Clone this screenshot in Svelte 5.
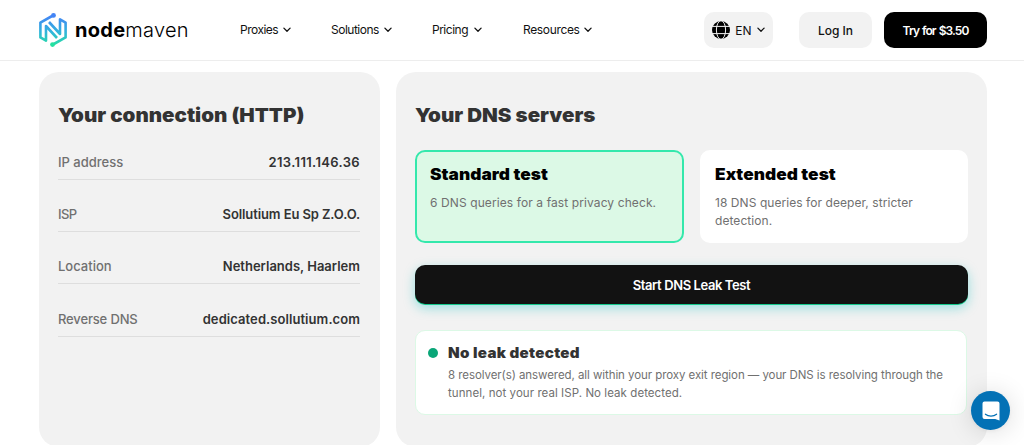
<script>
  const nav = [
    { label: 'Proxies', key: 'proxies' },
    { label: 'Solutions', key: 'solutions' },
    { label: 'Pricing', key: 'pricing' },
    { label: 'Resources', key: 'resources' }
  ];

  const connection = [
    { label: 'IP address', value: '213.111.146.36', key: 'ip' },
    { label: 'ISP', value: 'Sollutium Eu Sp Z.O.O.', key: 'isp' },
    { label: 'Location', value: 'Netherlands, Haarlem', key: 'location' },
    { label: 'Reverse DNS', value: 'dedicated.sollutium.com', key: 'reverse' }
  ];

  let mode = $state('standard');
</script>

{#snippet chevron()}
  <svg class="chevron" viewBox="0 0 8 6" width="8" height="6">
    <path d="M0.9 1.1 4 4.2 7.1 1.1" fill="none" stroke="currentColor" stroke-width="1.3" stroke-linecap="round" stroke-linejoin="round" />
  </svg>
{/snippet}

<header>
  <a class="logo" href="#home">
    <svg viewBox="0 0 28 36" width="28" height="36">
      <defs>
        <linearGradient id="mark" x1="0" y1="0" x2="0" y2="36" gradientUnits="userSpaceOnUse">
          <stop offset="0.1" stop-color="#4384f5" />
          <stop offset="0.55" stop-color="#32b4dc" />
          <stop offset="0.95" stop-color="#25e0a0" />
        </linearGradient>
      </defs>
      <g fill="none" stroke="url(#mark)" stroke-width="2.6" stroke-linejoin="round">
        <path d="M14 3.5 1.4 10.6V25.4L7 28.6V14L18 26" />
        <path d="M14 32.5 26.6 25.4V10.6L21 7.4V22L10 10" />
      </g>
      <circle cx="14.5" cy="3.4" r="2.4" fill="#4384f5" />
      <circle cx="13.5" cy="32.6" r="2.4" fill="#25e0a0" />
    </svg>
    <span class="word"><b>node</b><span>maven</span></span>
  </a>
  <nav>
    {#each nav as item}
      <a class={item.key} href="#{item.key}"><span>{item.label}</span>{@render chevron()}</a>
    {/each}
  </nav>
  <div class="actions">
    <button class="lang">
      <svg viewBox="0 0 18 18" width="18" height="18">
        <circle cx="9" cy="9" r="9" fill="#000" />
        <g fill="none" stroke="#f2f2f2" stroke-width="1">
          <ellipse cx="9" cy="9" rx="4.6" ry="9.3" />
          <path d="M0 5.4H18M0 12.6H18" />
        </g>
      </svg>
      <span>EN</span>
      {@render chevron()}
    </button>
    <button class="login"><span>Log In</span></button>
    <button class="try"><span>Try for $3.50</span></button>
  </div>
</header>

<main>
  <section class="panel connection">
    <h2>Your connection (HTTP)</h2>
    <dl>
      {#each connection as row}
        <div class="row {row.key}">
          <dt>{row.label}</dt>
          <dd>{row.value}</dd>
        </div>
      {/each}
    </dl>
  </section>

  <section class="panel servers">
    <h2>Your DNS servers</h2>
    <div class="tests">
      <button class="test standard" class:active={mode === 'standard'} onclick={() => (mode = 'standard')}>
        <strong>Standard test</strong>
        <span>6 DNS queries for a fast privacy check.</span>
      </button>
      <button class="test extended" class:active={mode === 'extended'} onclick={() => (mode = 'extended')}>
        <strong>Extended test</strong>
        <span>18 DNS queries for deeper, stricter<br />detection.</span>
      </button>
    </div>
    <button class="start"><span>Start DNS Leak Test</span></button>
    <div class="result">
      <i class="dot"></i>
      <div>
        <h3>No leak detected</h3>
        <p>
          <span class="first">8 resolver(s) answered, all within your proxy exit region — your DNS is resolving through the</span><br />
          <span class="second">tunnel, not your real ISP. No leak detected.</span>
        </p>
      </div>
    </div>
  </section>
</main>

<button class="chat" aria-label="Open chat">
  <svg viewBox="0 0 18 20" width="18" height="20">
    <path d="M2.5 0.5h13a2 2 0 0 1 2 2v17L13.2 18H2.5a2 2 0 0 1-2-2V2.5a2 2 0 0 1 2-2z" fill="#fff" />
    <path d="M3.4 13.2c3.2 2.6 8 2.6 11.2 0" fill="none" stroke="#0371b5" stroke-width="1.2" stroke-linecap="round" />
  </svg>
</button>

<style>
  :global(body) {
    height: 445px;
    overflow: hidden;
    background: #fff;
    color: #111;
    font-family: Inter, "Liberation Sans", sans-serif;
  }

  button {
    border: 0;
    padding: 0;
    font: inherit;
    color: inherit;
    text-align: left;
  }

  a {
    color: inherit;
    text-decoration: none;
  }

  h2, h3, p, dl, dd {
    margin: 0;
  }

  span, dt, dd, h2, h3, strong {
    white-space: nowrap;
  }

  header {
    display: flex;
    align-items: center;
    box-sizing: border-box;
    height: 61px;
    padding: 0 37px 0 39px;
    border-bottom: 1px solid #ededed;
  }

  .logo {
    display: flex;
    align-items: center;
    gap: 8px;
    width: 201px;
    color: #000;
    font-size: 20px;
    line-height: 36px;
  }

  .word {
    letter-spacing: 0.27px;
  }

  .word b {
    font-weight: 700;
  }

  .word span {
    font-weight: 300;
  }

  nav {
    display: flex;
    font-size: 12px;
    line-height: 18px;
    letter-spacing: -0.5px;
  }

  nav a {
    display: flex;
    align-items: center;
    justify-content: space-between;
    width: 51px;
    margin-right: 40px;
  }

  nav .solutions { width: 61px; }
  nav .pricing { width: 50px; }
  nav .resources { width: 69px; margin: 0 0 0 1px; letter-spacing: -0.35px; }

  .actions {
    display: flex;
    margin-left: auto;
    font-size: 12px;
    font-weight: 500;
    letter-spacing: -0.3px;
  }

  .actions button {
    display: flex;
    align-items: center;
    justify-content: center;
    box-sizing: border-box;
    height: 36px;
    border-radius: 10px;
    background: #f2f2f2;
  }

  .actions .lang {
    width: 69px;
    gap: 5px;
    margin-right: 26px;
    font-weight: 400;
  }

  .actions .login {
    width: 73px;
    margin-right: 12px;
  }

  .actions .try {
    width: 103px;
    background: #000;
    color: #fff;
    font-weight: 600;
    letter-spacing: -0.95px;
    word-spacing: 1px;
  }

  main {
    display: grid;
    grid-template-columns: 341px 591px;
    gap: 16px;
    padding: 11px 37px 0 39px;
  }

  .panel {
    box-sizing: border-box;
    height: 375px;
    padding: 30px 19px 0;
    border-radius: 20px;
    background: #f2f2f2;
  }

  h2, h3, .test strong {
    transform: scaleX(1.08);
    transform-origin: left;
    font-weight: 900;
  }

  h2 {
    color: #333;
    font-size: 19px;
    line-height: 27px;
  }

  dl {
    margin-top: 12px;
    font-size: 13px;
  }

  .row {
    display: flex;
    justify-content: space-between;
    align-items: flex-end;
    box-sizing: border-box;
    height: 52.2px;
    padding-bottom: 7px;
    border-bottom: 1px solid #dedede;
    line-height: 20px;
  }

  .row:first-child {
    height: 39px;
  }

  dt {
    color: #707070;
    font-weight: 500;
  }

  dd {
    color: #333;
    font-weight: 600;
  }

  .connection {
    padding-right: 20px;
  }

  .ip dd { letter-spacing: 0.35px; }
  .isp dt { letter-spacing: -0.6px; }
  .isp dd { letter-spacing: -0.1px; }
  .reverse dt { letter-spacing: -0.15px; }
  .reverse dd { letter-spacing: 0.07px; }

  .servers {
    padding-right: 20px;
  }

  .tests {
    display: grid;
    grid-template-columns: 269px 268px;
    gap: 16px;
    margin-top: 21px;
  }

  .test {
    display: flex;
    flex-direction: column;
    align-items: flex-start;
    box-sizing: border-box;
    height: 93px;
    padding: 12px 13px;
    border: 2px solid #fff;
    border-radius: 10px;
    background: #fff;
  }

  .test.active {
    border-color: #34e8ac;
    background: #dcf9e6;
  }

  .test strong {
    color: #000;
    font-size: 16px;
    line-height: 20px;
    letter-spacing: 0.04px;
  }

  .test span {
    margin-top: 10px;
    color: #707070;
    font-size: 12px;
    line-height: 18px;
    letter-spacing: 0.1px;
  }

  .extended span {
    letter-spacing: 0.06px;
  }

  .start {
    display: flex;
    align-items: center;
    justify-content: center;
    width: 553px;
    height: 39px;
    margin-top: 22px;
    border-radius: 10px;
    background: #121212;
    color: #fff;
    font-size: 13px;
    font-weight: 600;
    letter-spacing: -0.4px;
    box-shadow: 0 1px 0 #14c98c, 0 4px 12px rgba(0, 190, 190, 0.38);
  }

  .result {
    display: flex;
    box-sizing: border-box;
    width: 552px;
    height: 85px;
    margin-top: 26px;
    padding: 12px;
    border: 1px solid #dcf9e6;
    border-radius: 10px;
    background: #fff;
  }

  .dot {
    flex: none;
    width: 10px;
    height: 10px;
    margin: 5px 10px 0 0;
    border-radius: 50%;
    background: #0aa678;
  }

  h3 {
    color: #333;
    font-size: 14px;
    line-height: 20px;
    letter-spacing: 0.28px;
  }

  p {
    margin-top: 4px;
    color: #707070;
    font-size: 11.5px;
    line-height: 17.5px;
  }

  .first { letter-spacing: -0.07px; }
  .second { letter-spacing: 0.06px; }

  .chat {
    position: fixed;
    left: 971px;
    top: 391px;
    display: flex;
    align-items: center;
    justify-content: center;
    width: 39px;
    height: 39px;
    border-radius: 50%;
    background: #0371b5;
    box-shadow: 0 1px 5px rgba(0, 0, 0, 0.06), 0 2px 26px rgba(0, 0, 0, 0.14);
  }
</style>
